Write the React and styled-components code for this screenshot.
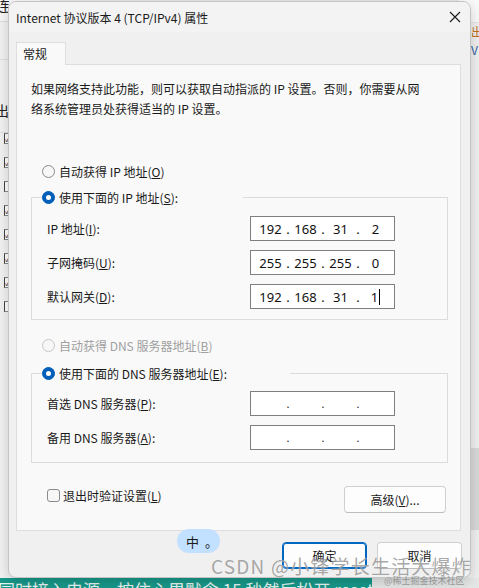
import React from 'react';
import styled, { createGlobalStyle } from 'styled-components';

const GlobalStyle = createGlobalStyle`
	body {
		margin: 0;
		font-family: "Noto Sans CJK SC", "Noto Sans", sans-serif;
	}
`

const UI_FONT = `"Noto Sans CJK SC", "Noto Sans", sans-serif`

const Desktop = styled.div`
	position: relative;
	width: 479px;
	height: 588px;
	overflow: hidden;
	background: #e6e8e8;
`

const BackLeft = styled.div`
	position: absolute;
	left: 0;
	top: 0;
	width: 40px;
	height: 578px;
	background: #f3f3f3;
	display: flex;
	flex-direction: column;
`

const BackHeader = styled.div`
	height: 21px;
	border-bottom: 1px solid #dcdcdc;
	background: #f8f8f8;
	font: 14px ${UI_FONT};
	line-height: 10px;
	color: #222;
	overflow: hidden;
	text-indent: -4px;
`

const BackBand = styled.div`
	height: ${p => p.h}px;
	border-bottom: 1px solid #e0e0e0;
	background: ${p => p.bg || '#f3f3f3'};
	font: 14px ${UI_FONT};
	color: #222;
	text-indent: -5px;
	line-height: ${p => p.lh || 14}px;
`

const BackCheck = styled.div`
	width: 7px;
	height: 9px;
	margin: 0 0 13px 4px;
	border: 1px solid #8a8a8a;
	border-left-color: #444;
	background: #fff;
	font-size: 8px;
	line-height: 9px;
	color: #222;
`

const BackRight = styled.div`
	position: absolute;
	right: 0;
	top: 0;
	width: 20px;
	height: 578px;
	display: flex;
	flex-direction: column;
	background: #f0f0f0;
`

const BackRightTop = styled.div`
	height: 22px;
	background: #fafafa;
	border-bottom: 1px solid #e6e6e6;
`

const BackRightText = styled.div`
	padding-left: 12px;
	font: 12px ${UI_FONT};
	line-height: 18px;
	color: ${p => p.color};
`

const BackRightFill = styled.div`
	flex: ${p => p.fixed ? `0 0 ${p.fixed}px` : '1'};
`

const BackRightGray = styled.div`
	height: 82px;
	background: #d9d9d9;
`

const Strip = styled.div`
	position: absolute;
	left: 0;
	top: 578px;
	width: 372px;
	height: 30px;
	background: #17998a;
	color: #e6f4f2;
	font: 17px ${UI_FONT};
	line-height: 22px;
	white-space: nowrap;
	overflow: hidden;
	text-indent: -2px;
	padding-top: 1px;
`

const Dialog = styled.div`
	position: absolute;
	left: 8px;
	top: 1px;
	width: 463px;
	height: 577px;
	box-sizing: border-box;
	border: 1px solid #c4c4c4;
	border-radius: 8px;
	background: #f0f0f0;
	box-shadow: 0 4px 14px rgba(0, 0, 0, 0.18);
	display: flex;
	flex-direction: column;
	overflow: hidden;
	font-family: ${UI_FONT};
	font-size: 12px;
	color: #1a1a1a;
`

const TitleBar = styled.div`
	height: 30px;
	flex-shrink: 0;
	display: flex;
	align-items: center;
	justify-content: space-between;
	padding: 0 9px 0 7px;
	background: #f3f3f3;
	font-size: 12px;
`

const Body = styled.div`
	flex: 1;
	display: flex;
	flex-direction: column;
	padding: 10px 9px 0 7px;
`

const TabStrip = styled.div`
	display: flex;
	position: relative;
	z-index: 1;
	margin-bottom: -1px;
`

const Tab = styled.div`
	width: 50px;
	height: 23px;
	box-sizing: border-box;
	border: 1px solid #dedede;
	border-bottom: none;
	background: #f9f9f9;
	padding-left: 6px;
	line-height: 22px;
`

const TabPanel = styled.div`
	height: 467px;
	box-sizing: border-box;
	border: 1px solid #dedede;
	background: #f9f9f9;
	padding: 14px 12px 0 14px;
	display: flex;
	flex-direction: column;
`

const Description = styled.p`
	margin: 0;
	line-height: 20px;
	width: 400px;
`

const RadioRow = styled.label`
	display: flex;
	align-items: center;
	gap: 4px;
	height: 18px;
	margin: ${p => p.margin || '0'};
	color: ${p => (p.disabled ? '#a0a0a0' : '#1a1a1a')};
	white-space: nowrap;
`

const RadioCircle = styled.span`
	width: 13px;
	height: 13px;
	box-sizing: border-box;
	border-radius: 50%;
	flex-shrink: 0;
	display: flex;
	align-items: center;
	justify-content: center;
	border: 1px solid ${p => (p.checked ? '#005fb8' : p.disabled ? '#c6c6c6' : '#8a8a8a')};
	background: ${p => (p.checked ? '#005fb8' : '#f7f7f7')};

	&::after {
		content: '';
		width: 5px;
		height: 5px;
		border-radius: 50%;
		background: #fff;
		display: ${p => (p.checked ? 'block' : 'none')};
	}
`

const Group = styled.fieldset`
	margin: ${p => p.margin};
	padding: ${p => p.top}px 0 ${p => p.bottom}px 15px;
	border: 1px solid #dcdcdc;
	width: 417px;
	box-sizing: border-box;
	min-inline-size: 0;
	display: flex;
	flex-direction: column;
	gap: 9px;
`

const Legend = styled.legend`
	padding: 0;
	margin-left: -5px;
	width: ${p => p.width}px;
`

const FieldRow = styled.div`
	display: grid;
	grid-template-columns: 203px 145px;
	align-items: center;
`

const IpBox = styled.div`
	height: 25px;
	box-sizing: border-box;
	border: 1px solid #7f7f7f;
	background: #fff;
	padding-left: 5px;
	display: flex;
	align-items: center;
	font-family: "Noto Sans", "DejaVu Sans", sans-serif;
	font-size: 13px;
	color: #111;
`

const Octet = styled.span`
	width: 29px;
	display: flex;
	justify-content: center;
	align-items: center;
`

const Dot = styled.span`
	width: 6px;
	text-align: center;
	font-size: ${p => (p.empty ? '11px' : '13px')};
`

const Caret = styled.span`
	width: 1px;
	height: 16px;
	margin-left: 1px;
	background: #000;
`

const BottomRow = styled.div`
	display: flex;
	justify-content: space-between;
	align-items: flex-start;
	margin: 23px 2px 0 16px;
`

const CheckRow = styled.label`
	display: flex;
	align-items: center;
	gap: 3px;
	height: 16px;
	margin-top: 1px;
`

const CheckBox = styled.span`
	width: 13px;
	height: 13px;
	box-sizing: border-box;
	border: 1px solid #8a8a8a;
	border-radius: 3px;
	background: #f7f7f7;
`

const Button = styled.button`
	width: ${p => p.width || 85}px;
	height: 27px;
	box-sizing: border-box;
	border: 1px solid ${p => (p.primary ? '#0067c0' : '#d0d0d0')};
	box-shadow: ${p => (p.primary ? 'inset 0 0 0 1px #0067c0' : 'none')};
	border-bottom-color: ${p => (p.primary ? '#0067c0' : '#bdbdbd')};
	border-radius: 4px;
	background: #fdfdfd;
	font-family: ${UI_FONT};
	font-size: 12px;
	color: #1a1a1a;
	padding: 0;
`

const Footer = styled.div`
	display: flex;
	justify-content: flex-end;
	gap: 10px;
	padding: 11px 0 0;
	margin-right: -1px;
`

const ImeBubble = styled.div`
	position: absolute;
	left: 177px;
	top: 529px;
	width: 43px;
	height: 24px;
	border-radius: 12px;
	background: #c2e0ff;
	display: flex;
	align-items: center;
	gap: 6px;
	padding-left: 9px;
	box-sizing: border-box;
	font: 13px ${UI_FONT};
	color: #1a1a1a;
`

const Watermark = styled.div`
	position: absolute;
	left: 211px;
	top: 553px;
	font: 19px ${UI_FONT};
	letter-spacing: 1.2px;
	line-height: 26px;
	color: rgba(110, 110, 110, 0.62);
	white-space: nowrap;
	text-shadow: 0 0 1px rgba(255, 255, 255, 0.8);
`

const SmallMark = styled.div`
	position: absolute;
	left: 384px;
	top: 575px;
	font: 9px ${UI_FONT};
	line-height: 12px;
	color: rgba(120, 120, 120, 0.7);
	white-space: nowrap;
`

const CloseIcon = () => (
	<svg width="12" height="12" viewBox="0 0 12 12">
		<path d="M1 1 L11 11 M11 1 L1 11" stroke="#1a1a1a" strokeWidth="1.1" fill="none" />
	</svg>
)

const IpField = ({ octets, caret }) => (
	<IpBox>
		{octets.map((value, i) => (
			<React.Fragment key={i}>
				<Octet>
					{value}
					{caret && i === 3 && <Caret />}
				</Octet>
				{i < 3 && <Dot empty={!value}>.</Dot>}
			</React.Fragment>
		))}
	</IpBox>
)

const Radio = ({ checked, disabled, children, margin }) => (
	<RadioRow disabled={disabled} margin={margin}>
		<RadioCircle checked={checked} disabled={disabled} />
		<span>{children}</span>
	</RadioRow>
)

const ipRows = [
	{ label: <>IP 地址(<u>I</u>):</>, octets: ['192', '168', '31', '2'] },
	{ label: <>子网掩码(<u>U</u>):</>, octets: ['255', '255', '255', '0'] },
	{ label: <>默认网关(<u>D</u>):</>, octets: ['192', '168', '31', '1'], caret: true },
]

const dnsRows = [
	{ label: <>首选 DNS 服务器(<u>P</u>):</>, octets: ['', '', '', ''] },
	{ label: <>备用 DNS 服务器(<u>A</u>):</>, octets: ['', '', '', ''] },
]

const App = () => (
	<>
		<GlobalStyle />
		<Desktop>
			<BackLeft>
				<BackHeader>连</BackHeader>
				<BackBand h={37}></BackBand>
				<BackBand h={72} lh={100}>出</BackBand>
				{Array.from({ length: 8 }).map((_, i) => (
					<BackCheck key={i}>{i === 2 || i === 7 ? '' : '✓'}</BackCheck>
				))}
			</BackLeft>
			<BackRight>
				<BackRightTop />
				<BackRightText color="#c07020">出</BackRightText>
				<BackRightText color="#3060a0">V</BackRightText>
				<BackRightFill />
				<BackRightGray />
				<BackRightFill fixed={48} />
			</BackRight>
			<Strip>同时接入电源，按住心里默念 15 秒然后松开 reset</Strip>

			<Dialog>
				<TitleBar>
					<span>Internet 协议版本 4 (TCP/IPv4) 属性</span>
					<CloseIcon />
				</TitleBar>
				<Body>
					<TabStrip>
						<Tab>常规</Tab>
					</TabStrip>
					<TabPanel>
						<Description>
							如果网络支持此功能，则可以获取自动指派的 IP 设置。否则，你需要从网络系统管理员处获得适当的 IP 设置。
						</Description>
						<Radio margin="43px 0 0 11px">自动获得 IP 地址(<u>O</u>)</Radio>
						<Group margin="8px 0 0" top={10} bottom={10}>
							<Legend width={201}>
								<Radio checked>使用下面的 IP 地址(<u>S</u>):</Radio>
							</Legend>
							{ipRows.map((row, i) => (
								<FieldRow key={i}>
									<span>{row.label}</span>
									<IpField octets={row.octets} caret={row.caret} />
								</FieldRow>
							))}
						</Group>
						<Radio disabled margin="16px 0 0 11px">自动获得 DNS 服务器地址(<u>B</u>)</Radio>
						<Group margin="10px 0 0" top={9} bottom={12}>
							<Legend width={248}>
								<Radio checked>使用下面的 DNS 服务器地址(<u>E</u>):</Radio>
							</Legend>
							{dnsRows.map((row, i) => (
								<FieldRow key={i}>
									<span>{row.label}</span>
									<IpField octets={row.octets} />
								</FieldRow>
							))}
						</Group>
						<BottomRow>
							<CheckRow>
								<CheckBox />
								<span>退出时验证设置(<u>L</u>)</span>
							</CheckRow>
							<Button width={102}>高级(<u>V</u>)...</Button>
						</BottomRow>
					</TabPanel>
					<Footer>
						<Button primary>确定</Button>
						<Button>取消</Button>
					</Footer>
				</Body>
			</Dialog>

			<ImeBubble>
				<span>中</span>
				<span>。</span>
			</ImeBubble>
			<Watermark>CSDN @小锋学长生活大爆炸</Watermark>
			<SmallMark>@稀土掘金技术社区</SmallMark>
		</Desktop>
	</>
)

export default App
